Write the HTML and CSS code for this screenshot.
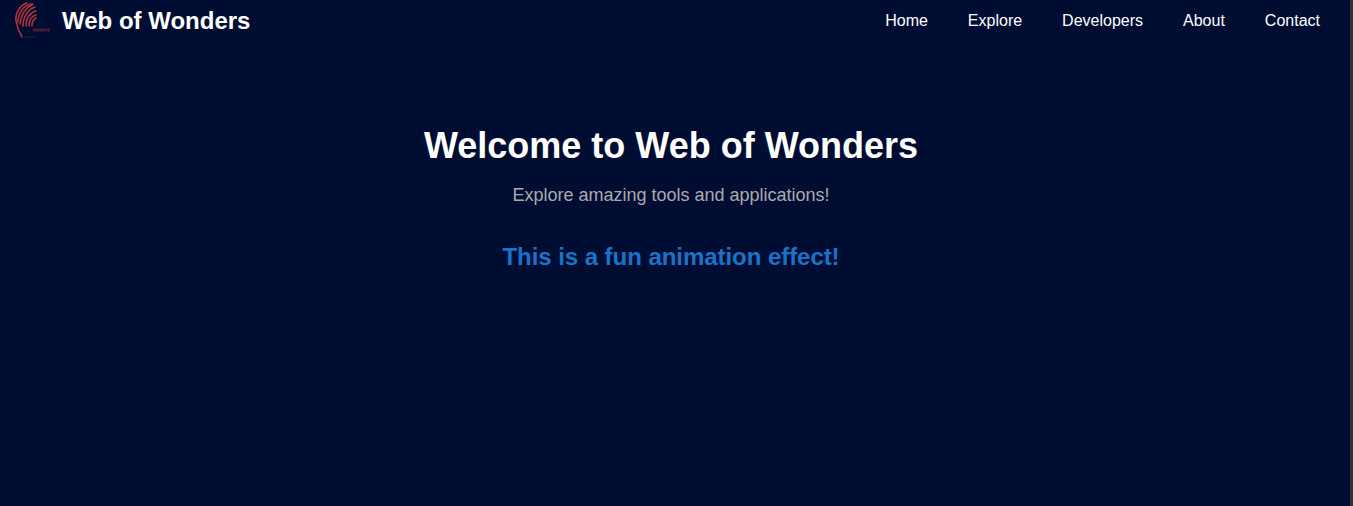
FILE: index.html
```html
<!DOCTYPE html>
<html lang="en">
<head>
<meta charset="utf-8">
<title>Web of Wonders</title>
<link rel="stylesheet" href="styles.css">
</head>
<body>
<div class="page">
  <header class="navbar">
    <div class="brand">
      <svg class="logo" width="36" height="40" viewBox="0 0 36 40" fill="none">
        <g class="feather">
          <path d="M13 2C6 4 1 12 2 20C3 26 5 31 8 36"/>
          <path d="M17 3C10 4 4 12 4 21"/>
          <path d="M19 3C13 6 7 12 6 23"/>
          <path d="M21 6C15 8 9 15 9 25"/>
          <path d="M22 10C17 11 12 16 12 25"/>
          <path d="M22 14C18 15 15 19 15 25"/>
          <path d="M22 17C20 18 18 21 18 25"/>
        </g>
        <path class="mark" d="M19 29H36"/>
        <path class="mark-small" d="M11 36H21"/>
      </svg>
      <span class="brand-name">Web of Wonders</span>
    </div>
    <nav class="links">
      <a href="#">Home</a>
      <a href="#">Explore</a>
      <a href="#">Developers</a>
      <a href="#">About</a>
      <a href="#">Contact</a>
    </nav>
  </header>
  <main class="hero">
    <h1>Welcome to Web of Wonders</h1>
    <p class="sub">Explore amazing tools and applications!</p>
    <p class="fun">This is a fun animation effect!</p>
  </main>
</div>
<div class="scrollbar"></div>
</body>
</html>
```
FILE: styles.css
```css
html, body { margin: 0; height: 100%; overflow: hidden; }
body { display: flex; background: #000d33; color: #fff; font-family: "Liberation Sans", Arial, sans-serif; }
.page { flex: 1; min-width: 0; }
.scrollbar { width: 3px; background: #333; }
.navbar { display: flex; justify-content: space-between; align-items: center; height: 42px; padding: 0 30px 0 14px; }
.brand { display: flex; align-items: center; gap: 12px; }
.logo { display: block; }
.feather { stroke: #b8333a; stroke-width: 1.5; stroke-linecap: round; }
.mark { stroke: #5a2038; stroke-width: 3; stroke-dasharray: 1.6 .5; }
.mark-small { stroke: #33183a; stroke-width: 1.5; stroke-dasharray: 2 1; }
.brand-name { font-size: 24px; font-weight: 700; }
.links { display: flex; gap: 40px; }
.links a { color: #fff; text-decoration: none; font-size: 16px; }
.hero { text-align: center; padding: 83px 8px 0 0; }
h1 { margin: 0; font-size: 36px; line-height: 42px; font-weight: 700; }
.sub { margin: 18px 0 0; font-size: 18px; line-height: 21px; color: #aaa; }
.fun { margin: 37px 0 0; font-size: 24px; line-height: 28px; font-weight: 700; color: #1a73c8; letter-spacing: -0.05px; }
```
